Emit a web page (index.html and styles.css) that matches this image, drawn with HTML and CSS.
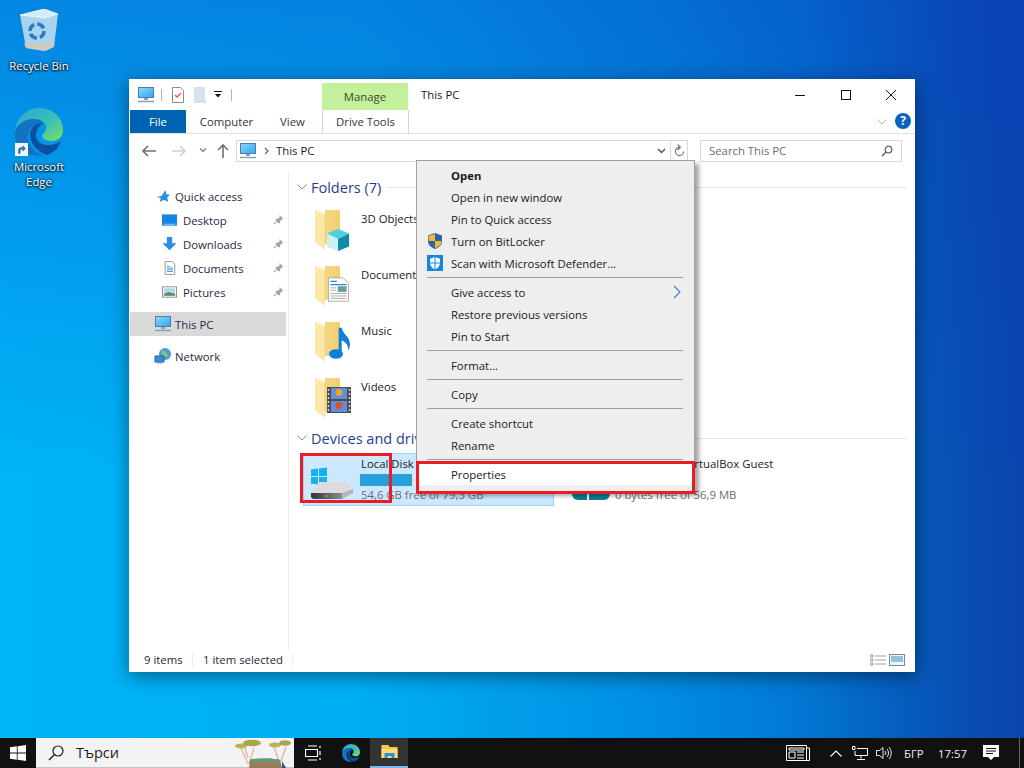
FILE: index.html
```html
<!DOCTYPE html>
<html>
<head>
    <title>This PC</title>
    <link rel="stylesheet" href="styles.css">
</head>
<body>
<svg class="defs" width="0" height="0">
    <defs>
        <linearGradient id="screenFill" x1="0" y1="0" x2="1" y2="1">
            <stop offset="0" stop-color="#8ed8fb"/>
            <stop offset="1" stop-color="#2ea6f0"/>
        </linearGradient>
        <linearGradient id="folderFill" x1="0" y1="0" x2="1" y2="0">
            <stop offset="0" stop-color="#f8dc90"/>
            <stop offset="1" stop-color="#f3cd72"/>
        </linearGradient>
        <linearGradient id="edgeFill" x1="0" y1="0" x2="1" y2="1">
            <stop offset="0" stop-color="#2aa4d8"/>
            <stop offset="0.6" stop-color="#3cc4b0"/>
            <stop offset="1" stop-color="#7ee05e"/>
        </linearGradient>
        <linearGradient id="diskFront" x1="0" y1="0" x2="1" y2="0">
            <stop offset="0" stop-color="#333"/>
            <stop offset="1" stop-color="#8a8a8a"/>
        </linearGradient>
        <symbol id="monitor" viewBox="0 0 18 16">
            <rect x="1.5" y="0.5" width="15" height="10" fill="url(#screenFill)" stroke="#4d7ea8"/>
            <path d="M7 11h4v2H7z" fill="#8aa3b8"/>
            <path d="M1 14.5h16" stroke="#7f9db8" stroke-width="1.4"/>
        </symbol>
        <symbol id="folder" viewBox="0 0 25 40">
            <path d="M0 0h25v30l-15 4V0z" fill="url(#folderFill)"/>
            <path d="M0 0l10 4v36L0 32z" fill="#fbe7a8"/>
            <path d="M10 4v30l15-4" fill="none" stroke="#eec266" stroke-width=".6"/>
        </symbol>
        <symbol id="pin" viewBox="0 0 12 12">
            <path d="M7 1l4 4-1.200 .6-2 2.200-.3 2-1.300.6-3.600-3.600.6-1.300 2-.3 2.200-2z" fill="#a3a3a3"/>
            <path d="M3.500 8.500L1 11" stroke="#a3a3a3" stroke-width="1.200"/>
        </symbol>
        <symbol id="winlogo" viewBox="0 0 16 16">
            <path d="M0 2.300l6.800-1v6.300H0zM7.600 1.200L16 0v7.600H7.600zM0 8.400h6.800v6.300l-6.800-1zM7.600 8.400H16V16l-8.400-1.200z" fill="currentColor"/>
        </symbol>
        <symbol id="edge" viewBox="0 0 48 48">
            <path d="M0 24C1 10 11 0 24 0c14 0 24 10 24 22 0 7-5 11-11 11-5 0-10-2-10-5 0-2 3-3 4-7 1-6-5-10-11-10C10 11 1 17 0 24z" fill="url(#edgeFill)"/>
            <path d="M0 24c1-8 11-14 20-13 4 .5 7 2 8 4-6-1-14 3-15 12-1 9 6 17 15 20C13 50-1 40 0 24z" fill="#1372c4"/>
            <path d="M28 15c-8-1-13 5-13 12 0 9 8 17 17 20 6-2 11-6 14-14-4 3-9 4-13 4-9 0-13-6-12-12 1-4 4-8 7-10z" fill="#0b4f9e"/>
        </symbol>
    </defs>
</svg>

<div class="desktop">
    <div class="desk-icon recycle">
        <svg class="recycle-art" viewBox="0 0 40 44">
            <path d="M1 6L25 0l14 5-4 33-9 4-19-3z" fill="#a9d4ec"/>
            <path d="M1 6L25 0l14 5-13 4z" fill="#d5ecf8" stroke="#eef8fd" stroke-width=".8"/>
            <path d="M5 34l21 1 9-3-1 6-8 4-19-3z" fill="#cfc9bf"/>
            <circle cx="18" cy="22" r="7" fill="none" stroke="#2a79c4" stroke-width="3.500" stroke-dasharray="8 3"/>
        </svg>
        <span>Recycle Bin</span>
    </div>
    <div class="desk-icon edge-link">
        <div class="edge-art">
            <svg class="edge-large"><use href="#edge"/></svg>
            <svg class="shortcut" viewBox="0 0 12 12">
                <rect width="12" height="12" fill="#f4f4f4"/>
                <path d="M3 10V7c0-2 1-3 3-3h1V2l3 3-3 3V6H6C5 6 5 7 5 8v2z" fill="#2a6fb0"/>
            </svg>
        </div>
        <span>Microsoft<br>Edge</span>
    </div>

    <div class="window">
        <div class="top-strip">
            <div class="quick-bar">
                <svg class="ico18"><use href="#monitor"/></svg>
                <i class="qsep"></i>
                <svg class="qa-check" viewBox="0 0 12 16">
                    <path d="M.5.500h8l3 3v12H.500z" fill="#fff" stroke="#8c8c8c"/>
                    <path d="M3 8l2 2 4-4" fill="none" stroke="#e2572b" stroke-width="1.300"/>
                </svg>
                <svg class="qa-doc" viewBox="0 0 12 16">
                    <path d="M0 0h11v13h1v3H0z" fill="#d5e1f1"/>
                </svg>
                <svg class="qa-drop" viewBox="0 0 8 7">
                    <path d="M0 0h8v1H0zM1 3h6L4 6.500z" fill="#111"/>
                </svg>
                <i class="qsep last"></i>
            </div>
            <div class="manage-tab">Manage</div>
            <div class="win-title">This PC</div>
            <div class="win-controls">
                <svg viewBox="0 0 10 10"><path d="M0 5.500h10" stroke="#111"/></svg>
                <svg viewBox="0 0 10 10"><rect x=".5" y=".5" width="9" height="9" fill="none" stroke="#111"/></svg>
                <svg viewBox="0 0 10 10"><path d="M0 0l10 10M10 0L0 10" stroke="#111"/></svg>
            </div>
        </div>

        <div class="ribbon-tabs">
            <div class="tab tab-file">File</div>
            <div class="tab tab-computer">Computer</div>
            <div class="tab tab-view">View</div>
            <div class="tab tab-drive">Drive Tools</div>
            <svg class="ribbon-chev" viewBox="0 0 10 6"><path d="M.5.500L5 5 9.500.500" fill="none" stroke="#b4b4b4"/></svg>
            <div class="help">?</div>
        </div>

        <div class="nav-row">
            <svg class="nav-ico" viewBox="0 0 14 12"><path d="M6 1L1 6l5 5M1 6h13" fill="none" stroke="#707070" stroke-width="1.600"/></svg>
            <svg class="nav-ico" viewBox="0 0 14 12"><path d="M8 1l5 5-5 5M13 6H0" fill="none" stroke="#d0d0d0" stroke-width="1.600"/></svg>
            <svg class="nav-small" viewBox="0 0 8 5"><path d="M1 .5l3 3 3-3" fill="none" stroke="#777" stroke-width="1.200"/></svg>
            <svg class="nav-ico nav-up" viewBox="0 0 12 14"><path d="M1 6l5-5 5 5M6 1v13" fill="none" stroke="#707070" stroke-width="1.600"/></svg>
            <div class="address">
                <svg class="ico18"><use href="#monitor"/></svg>
                <svg class="crumb" viewBox="0 0 5 8"><path d="M1 1l3 3-3 3" fill="none" stroke="#666" stroke-width="1.200"/></svg>
                <span class="addr-text">This PC</span>
                <svg class="addr-drop" viewBox="0 0 9 6"><path d="M1 1l3.500 3.500L8 1" fill="none" stroke="#555" stroke-width="1.500"/></svg>
                <div class="addr-refresh">
                    <svg viewBox="0 0 12 14"><path d="M6 3.500a4.500 4.500 0 1 0 4.500 4.500M4 .5l3 3-3 3" fill="none" stroke="#777" stroke-width="1.300"/></svg>
                </div>
            </div>
            <div class="search">
                <span>Search This PC</span>
                <svg viewBox="0 0 12 12"><circle cx="7.500" cy="4.500" r="3.300" fill="none" stroke="#666" stroke-width="1.300"/><path d="M5 7l-4 4" stroke="#666" stroke-width="1.600"/></svg>
            </div>
        </div>

        <div class="main">
            <div class="sidebar">
                <div class="side-row top">
                    <svg class="side-ico star" viewBox="0 0 14 14"><path d="M9 0l1 4.500 4 .5-3 3 1 5-4.500-2.500L3 13l1-4-4-1.500 5-1z" fill="#2b8ee0"/></svg>
                    Quick access
                </div>
                <div class="side-row sub">
                    <svg class="side-ico" viewBox="0 0 16 12"><rect width="16" height="12" fill="#1287e6"/><path d="M2 10.500h12" stroke="#9fd3f7"/></svg>
                    Desktop
                    <svg class="pin"><use href="#pin"/></svg>
                </div>
                <div class="side-row sub">
                    <svg class="side-ico" viewBox="0 0 16 16"><path d="M5 0h6v7h5l-8 8-8-8h5z" fill="#2f8de4"/></svg>
                    Downloads
                    <svg class="pin"><use href="#pin"/></svg>
                </div>
                <div class="side-row sub">
                    <svg class="side-ico" viewBox="0 0 16 16"><path d="M3 .5h8l3 3v12H3z" fill="#fff" stroke="#8c8c8c"/><path d="M5 6h3M5 8h7M5 10h7M5 12h7" stroke="#3c8fd8"/></svg>
                    Documents
                    <svg class="pin"><use href="#pin"/></svg>
                </div>
                <div class="side-row sub">
                    <svg class="side-ico" viewBox="0 0 16 12"><rect x=".5" y=".5" width="15" height="11" fill="#fff" stroke="#8c8c8c"/><rect x="2" y="2" width="12" height="8" fill="#b5d8ec"/><path d="M2 8l5-2 7 2v2H2z" fill="#5f8a6c"/></svg>
                    Pictures
                    <svg class="pin"><use href="#pin"/></svg>
                </div>
                <div class="side-row selected group">
                    <svg class="ico18 side-pc"><use href="#monitor"/></svg>
                    This PC
                </div>
                <div class="side-row group">
                    <svg class="ico18 side-pc" viewBox="0 0 18 16"><circle cx="11" cy="6" r="6" fill="#4c9bd8"/><path d="M7 2l5 2 2 4-4 2z" fill="#8fc86a"/><rect x="1" y="8" width="9" height="6" fill="#2e8fe0" stroke="#28689c"/><path d="M3 15h5" stroke="#6e8ca6"/></svg>
                    Network
                </div>
            </div>

            <div class="content">
                <div class="group-head first">
                    <svg viewBox="0 0 10 6"><path d="M.5.500L5 5 9.500.500" fill="none" stroke="#8a8a8a"/></svg>
                    <span>Folders (7)</span>
                    <i></i>
                </div>
                <div class="folder-list">
                    <div class="folder-item">
                        <div class="folder-art">
                            <svg class="folder-back"><use href="#folder"/></svg>
                            <svg class="folder-badge badge-3d" viewBox="0 0 26 26">
                                <path d="M13 1l12 5-12 6L1 6z" fill="#4fd0e0"/>
                                <path d="M1 6l12 6v13L1 20z" fill="#c9f1f2"/>
                                <path d="M25 6l-12 6v13l12-5z" fill="#0d8ba8"/>
                            </svg>
                        </div>
                        <span>3D Objects</span>
                    </div>
                    <div class="folder-item">
                        <div class="folder-art">
                            <svg class="folder-back"><use href="#folder"/></svg>
                            <svg class="folder-badge badge-doc" viewBox="0 0 26 30">
                                <path d="M.5.500h18l7 7v22H.500z" fill="#fff" stroke="#9a9a9a"/>
                                <path d="M3 5h8M3 9h20" stroke="#2f86d8" stroke-width="1.400"/>
                                <rect x="12" y="11" width="11" height="7" fill="#6e9e9c"/>
                                <path d="M3 13h7M3 16h7M3 20h20M3 23h20M3 26h20" stroke="#9a9a9a"/>
                            </svg>
                        </div>
                        <span>Documents</span>
                    </div>
                    <div class="folder-item">
                        <div class="folder-art">
                            <svg class="folder-back"><use href="#folder"/></svg>
                            <svg class="folder-badge badge-music" viewBox="0 0 24 36">
                                <ellipse cx="8" cy="30" rx="8" ry="5.500" fill="#0f7fdc"/>
                                <path d="M11 30V0h3.500c1 7 9.500 10 9.500 19 0 3-1 5-2 7 0-7-3-10-7.500-11.500V30z" fill="#0f7fdc"/>
                            </svg>
                        </div>
                        <span>Music</span>
                    </div>
                    <div class="folder-item">
                        <div class="folder-art">
                            <svg class="folder-back"><use href="#folder"/></svg>
                            <svg class="folder-badge badge-video" viewBox="0 0 24 26">
                                <rect width="24" height="26" fill="#4b4b4b"/>
                                <rect x="4" y="1" width="16" height="11" fill="#5f8fe0"/>
                                <rect x="4" y="14" width="16" height="11" fill="#5f8fe0"/>
                                <circle cx="12" cy="5.500" r="3.600" fill="#e8a52c"/>
                                <circle cx="12" cy="18.500" r="3.600" fill="#d9542c"/>
                                <path d="M1.500 2v22M22.500 2v22" stroke="#ddd" stroke-width="1.400" stroke-dasharray="2 2"/>
                            </svg>
                        </div>
                        <span>Videos</span>
                    </div>
                </div>

                <div class="group-head second">
                    <svg viewBox="0 0 10 6"><path d="M.5.500L5 5 9.500.500" fill="none" stroke="#8a8a8a"/></svg>
                    <span>Devices and drives (2)</span>
                    <i></i>
                </div>
                <div class="drives">
                    <div class="drive active">
                        <svg class="drive-art" viewBox="0 0 44 32">
                            <path d="M1 1.500L8 .5V8H1zM9 .4L17 -.5V8H9zM1 9h7v7.500l-7-1zM9 9h8v8.500l-8-1z" fill="#15b0ef"/>
                            <path d="M1 25l8-11h27l7 7v4l-11 6H3z" fill="#dcdcdc"/>
                            <path d="M32 25l11-4v4l-11 6z" fill="#b5b5b5"/>
                            <path d="M1 25h31v6H3l-2-2z" fill="url(#diskFront)"/>
                            <path d="M15 28h3" stroke="#47d447" stroke-width="1.400"/>
                        </svg>
                        <div class="drive-info">
                            <div class="drive-name">Local Disk (C:)</div>
                            <div class="drive-bar"><b class="used-c"></b></div>
                            <div class="drive-free">54,6 GB free of 79,3 GB</div>
                        </div>
                    </div>
                    <div class="drive other">
                        <div class="disc-art"></div>
                        <div class="drive-info">
                            <div class="drive-name">DVD Drive (D:) VirtualBox Guest</div>
                            <div class="drive-bar blank"></div>
                            <div class="drive-free">0 bytes free of 56,9 MB</div>
                        </div>
                    </div>
                </div>
            </div>
        </div>

        <div class="status">
            <span class="st-count">9 items</span>
            <span class="st-sel">1 item selected</span>
            <div class="st-views">
                <svg viewBox="0 0 16 12"><path d="M0 1h3v2H0zM5 2h11M0 5h3v2H0zM5 6h11M0 9h3v2H0zM5 10h11" fill="none" stroke="#8a8a8a" stroke-width=".8"/></svg>
                <svg viewBox="0 0 16 12"><rect x=".5" y=".5" width="15" height="11" fill="#f2f6f9" stroke="#7a8894"/><rect x="2" y="2" width="12" height="6" fill="#8fc2e0"/></svg>
            </div>
        </div>
    </div>

    <div class="context-menu">
        <div class="item bold">Open</div>
        <div class="item">Open in new window</div>
        <div class="item">Pin to Quick access</div>
        <div class="item">
            <svg class="item-ico" viewBox="0 0 16 16"><path d="M8 0l7 2.500V8c0 4-3 6.500-7 8-4-1.500-7-4-7-8V2.500z" fill="#2f63a8"/><path d="M8 1v7h6.500c0 3.500-3 6-6.500 7.200V8H1.500V3z" fill="#f5b82e"/></svg>
            Turn on BitLocker
        </div>
        <div class="item">
            <svg class="item-ico" viewBox="0 0 16 16"><rect width="16" height="16" fill="#1585de"/><path d="M8 2l5 1.800V8c0 3-2 5-5 6.500C5 13 3 11 3 8V3.800z" fill="#fff"/><path d="M8 2v12.500M3 8h10" stroke="#1585de"/></svg>
            Scan with Microsoft Defender...
        </div>
        <hr>
        <div class="item">
            Give access to
            <svg class="sub-arrow" viewBox="0 0 8 14"><path d="M1 1l6 6-6 6" fill="none" stroke="#3d7fc0" stroke-width="1.100"/></svg>
        </div>
        <div class="item">Restore previous versions</div>
        <div class="item">Pin to Start</div>
        <hr>
        <div class="item">Format...</div>
        <hr>
        <div class="item">Copy</div>
        <hr>
        <div class="item">Create shortcut</div>
        <div class="item">Rename</div>
        <hr>
        <div class="item hover">Properties</div>
    </div>

    <div class="mark mark-disk"></div>
    <div class="mark mark-props"></div>

    <div class="taskbar">
        <div class="start"><svg class="start-logo"><use href="#winlogo"/></svg></div>
        <div class="tb-search">
            <svg class="tb-glass" viewBox="0 0 16 16"><circle cx="10" cy="6" r="5" fill="none" stroke="#222" stroke-width="1.200"/><path d="M6.500 9.500L1 15" stroke="#222" stroke-width="1.400"/></svg>
            <span>Търси</span>
            <svg class="tb-doodle" viewBox="0 0 60 30">
                <path d="M7 10l7 16M20 10l-5 16M11 10l3 10M40 9l5 14M52 9l-5 14" stroke="#dcbfae" stroke-width="1.500" fill="none"/>
                <ellipse cx="7" cy="8" rx="6" ry="2.500" fill="#b8b25a"/>
                <ellipse cx="18" cy="5" rx="9" ry="3.200" fill="#a9a64e"/>
                <ellipse cx="41" cy="7" rx="6" ry="2.500" fill="#b8b25a"/>
                <ellipse cx="51" cy="5" rx="6" ry="2.800" fill="#a9a64e"/>
                <path d="M16 22c4-2 26-2 30 0l2 8H15z" fill="#9a7a58"/>
                <path d="M16 22c4-2 26-2 30 0l.5 2H15.500z" fill="#5e9a78"/>
                <path d="M48 23l4 7h-4z" fill="#24578c"/>
            </svg>
        </div>
        <div class="tb-app">
            <svg class="tb-taskview" viewBox="0 0 16 16"><path d="M3 1h9M3 15h9M.5 4.500h12v7H.500zM15 1v2M15 6v4M15 13v2" fill="none" stroke="#fff" stroke-width="1.200"/></svg>
        </div>
        <div class="tb-app">
            <svg class="tb-edge"><use href="#edge"/></svg>
        </div>
        <div class="tb-app tb-active">
            <svg class="tb-explorer" viewBox="0 0 16 16">
                <path d="M0 1h7l1 2h8v11H0z" fill="#f7c948"/>
                <path d="M0 5h16v9H0z" fill="#fcdc78"/>
                <path d="M3 9h10v5h-3v-2H6v2H3z" fill="#2b8fd8"/>
            </svg>
        </div>
        <div class="tray">
            <svg class="tray-news" viewBox="0 0 24 16"><path d="M.5.500h20v15H.500zM20.500 3h3v12.500h-3M3 3h15v2H3zM3 7h6v6H3zM11 7h7M11 10h7M11 13h7" fill="none" stroke="#fff"/></svg>
            <svg class="tray-caret" viewBox="0 0 12 7"><path d="M.5 6.500L6 1l5.500 5.500" fill="none" stroke="#fff" stroke-width="1.100"/></svg>
            <svg class="tray-net" viewBox="0 0 16 14"><path d="M3 .5H.5v3H3zM5 2.500h10.500v7H3V5M9 9.500v3M5 13.500h8" fill="none" stroke="#fff"/></svg>
            <svg class="tray-sound" viewBox="0 0 16 14"><path d="M.5 4.500h3L7 1.500v11l-3.500-3h-3zM9 5a3 3 0 0 1 0 4M11 3a6 6 0 0 1 0 8M13 1a9 9 0 0 1 0 12" fill="none" stroke="#fff" stroke-width=".9"/></svg>
            <span class="tray-lang">БГР</span>
            <span class="tray-clock">17:57</span>
            <svg class="tray-note" viewBox="0 0 16 16"><path d="M0 0h16v12h-5l-3 3-3-3H0z" fill="#fff"/><path d="M3 3.500h10M3 6h10M3 8.500h7" stroke="#111"/></svg>
            <i class="show-desktop"></i>
        </div>
    </div>
</div>
</body>
</html>
```

FILE: styles.css
```css
:root {
    --ui-font: "Open Sans", "Noto Sans", sans-serif;
    --text-color: #1a1a1a;
    --line-color: #e3e3e3;
    --head-blue: #1e3f94;
    --menu-bg: #eeeeee;
    --menu-line: #a0a0a0;
    --mark-red: #ed1c24;
}

* {
    box-sizing: border-box;
}

html, body {
    margin: 0;
    height: 100%;
    overflow: hidden;
}

body {
    font-family: var(--ui-font);
    font-size: 11.35px;
    color: var(--text-color);
}

.defs {
    position: absolute;
}

svg {
    display: block;
    flex: none;
}

/* Desktop */
.desktop {
    position: relative;
    height: 768px;
    display: flex;
    flex-direction: column;
    justify-content: flex-end;
    overflow: hidden;
    background:
        linear-gradient(to bottom, rgba(10, 60, 190, 0.38) 0%, rgba(10, 60, 190, 0) 62%),
        linear-gradient(90deg, #00b4f8 0%, #00aef4 35%, #0090e4 62%, #0278d4 78%, #0850b4 93%, #0a45ae 100%);
}

.desk-icon {
    position: absolute;
    width: 74px;
    display: flex;
    flex-direction: column;
    align-items: center;
    color: #fff;
    text-align: center;
    line-height: 15px;
    font-size: 11.35px;
    text-shadow: 0 1px 2px #000, 0 0 3px #000;
}

.recycle {
    left: 2px;
    top: 9px;
}

.recycle-art {
    width: 40px;
    height: 44px;
    margin-bottom: 5px;
}

.edge-link {
    left: 2px;
    top: 108px;
}

.edge-art {
    position: relative;
    width: 48px;
    height: 48px;
    margin-bottom: 3px;
}

.edge-large {
    width: 48px;
    height: 48px;
}

.shortcut {
    position: absolute;
    left: 0;
    bottom: 0;
    width: 13px;
    height: 13px;
}

/* Explorer window */
.window {
    position: absolute;
    left: 129px;
    top: 79px;
    width: 786px;
    height: 593px;
    display: flex;
    flex-direction: column;
    background: #fff;
    box-shadow: 0 4px 18px rgba(0, 0, 0, 0.45);
}

.top-strip {
    height: 31px;
    display: flex;
    align-items: flex-end;
    flex: none;
}

.quick-bar {
    width: 193px;
    height: 31px;
    padding-left: 8px;
    display: flex;
    align-items: center;
    gap: 6px;
}

.ico18 {
    width: 18px;
    height: 16px;
}

.qsep {
    width: 1px;
    height: 12px;
    background: #b5b5b5;
}

.qsep.last {
    margin-left: 3px;
}

.qa-check, .qa-doc {
    width: 12px;
    height: 16px;
    margin-left: 4px;
}

.qa-drop {
    width: 8px;
    height: 7px;
    margin-left: 2px;
}

.manage-tab {
    width: 86px;
    height: 27px;
    background: #c3f09b;
    color: #3c4a38;
    text-align: center;
    line-height: 27px;
}

.win-title {
    margin-left: 13px;
    align-self: center;
}

.win-controls {
    margin-left: auto;
    height: 31px;
    width: 120px;
    padding-right: 19px;
    display: flex;
    justify-content: space-between;
    align-items: center;
}

.win-controls svg {
    width: 10px;
    height: 10px;
}

.ribbon-tabs {
    height: 24px;
    flex: none;
    display: flex;
    align-items: stretch;
    border-bottom: 1px solid #e1e1e1;
    position: relative;
}

.tab {
    line-height: 24px;
    text-align: center;
    color: #333;
}

.tab-file {
    width: 56px;
    margin-left: 1px;
    background: #0063b1;
    color: #fff;
}

.tab-computer {
    width: 80px;
    padding-left: 1px;
}

.tab-view {
    width: 53px;
}

.tab-drive {
    width: 87px;
    margin-left: 3px;
    border-left: 1px solid #d5d5d5;
    border-right: 1px solid #d5d5d5;
}

.ribbon-chev {
    width: 10px;
    height: 6px;
    margin-left: auto;
    align-self: center;
}

.help {
    width: 16px;
    height: 16px;
    margin: 3px 4px 0 8px;
    border-radius: 50%;
    background: #0a63bd;
    color: #fff;
    font-weight: 700;
    font-size: 12px;
    line-height: 16px;
    text-align: center;
}

.nav-row {
    height: 37px;
    flex: none;
    display: flex;
    align-items: center;
    padding: 0 0 4px 13px;
}

.nav-ico {
    width: 14px;
    height: 12px;
    margin-right: 16px;
}

.nav-small {
    width: 8px;
    height: 5px;
    margin-right: 10px;
    margin-left: -3px;
}

.nav-up {
    width: 12px;
    height: 14px;
    margin-right: 7px;
}

.address {
    width: 452px;
    height: 22px;
    display: flex;
    align-items: center;
    padding-left: 2px;
    border: 1px solid #d9d9d9;
}

.crumb {
    width: 5px;
    height: 8px;
    margin: 0 7px 0 7px;
}

.addr-drop {
    width: 9px;
    height: 6px;
    margin-left: auto;
    margin-right: 4px;
}

.addr-refresh {
    width: 17px;
    height: 20px;
    border-left: 1px solid #d9d9d9;
    display: flex;
    align-items: center;
    justify-content: center;
}

.addr-refresh svg {
    width: 11px;
    height: 13px;
}

.search {
    width: 202px;
    height: 22px;
    margin-left: 12px;
    display: flex;
    align-items: center;
    justify-content: space-between;
    padding: 0 8px;
    border: 1px solid #d9d9d9;
    color: #6d6d6d;
}

.search svg {
    width: 12px;
    height: 12px;
}

.main {
    flex: 1;
    display: flex;
    min-height: 0;
}

/* Navigation pane */
.sidebar {
    width: 160px;
    padding: 13px 2px 0 1px;
    border-right: 1px solid #eeeeee;
}

.side-row {
    height: 24px;
    display: flex;
    align-items: center;
    color: #1f2a44;
    position: relative;
}

.side-row.top {
    padding-left: 27px;
    gap: 5px;
}

.side-row.sub {
    padding-left: 32px;
    gap: 6px;
}

.side-row.group {
    margin-top: 8px;
    padding-left: 24px;
    gap: 3px;
}

.side-row.selected {
    background: #d9d9d9;
}

.side-ico {
    width: 15px;
    height: 14px;
}

.star {
    width: 13px;
    height: 13px;
}

.pin {
    position: absolute;
    left: 143px;
    top: 6px;
    width: 11px;
    height: 11px;
}

/* Content pane */
.content {
    flex: 1;
    min-width: 0;
    padding-left: 8px;
    padding-right: 8px;
}

.group-head {
    height: 20px;
    display: flex;
    align-items: center;
    color: var(--head-blue);
    font-size: 14.5px;
}

.group-head.first {
    margin-top: 6px;
}

.group-head.second {
    margin-top: -3px;
}

.group-head svg {
    width: 10px;
    height: 6px;
    margin-right: 4px;
}

.group-head i {
    flex: 1;
    height: 1px;
    background: var(--line-color);
    margin-left: 7px;
}

.folder-list {
    padding-top: 10px;
}

.folder-item {
    height: 56px;
    display: flex;
    padding-left: 17px;
    line-height: 24px;
}

.folder-art {
    position: relative;
    width: 47px;
    height: 46px;
}

.folder-back {
    position: absolute;
    left: 1px;
    top: 3px;
    width: 25px;
    height: 40px;
}

.folder-badge {
    position: absolute;
}

.badge-3d {
    left: 12px;
    top: 21px;
    width: 24px;
    height: 24px;
}

.badge-doc {
    left: 14px;
    top: 12px;
    width: 21px;
    height: 29px;
}

.badge-music {
    left: 15px;
    top: 8px;
    width: 21px;
    height: 33px;
}

.badge-video {
    left: 13px;
    top: 12px;
    width: 24px;
    height: 26px;
}

.folder-item span {
    line-height: 24px;
}

.drives {
    margin-top: 5px;
    display: flex;
}

.drive {
    width: 251px;
    height: 53px;
    display: flex;
    border: 1px solid transparent;
}

.drive.active {
    margin-left: 6px;
    background: #cce8ff;
    border-color: #99d1ff;
}

.drive.other {
    margin-left: 11px;
    width: 300px;
}

.drive-art {
    width: 44px;
    height: 32px;
    margin: 14px 7px 0 6px;
    overflow: visible;
}

.disc-art {
    width: 38px;
    height: 11px;
    margin: 35px 5px 0 6px;
    background: linear-gradient(90deg, #0f7f96 0 40%, #ffffff 40% 46%, #0f7f96 46%);
    border-radius: 0 0 6px 6px;
}

.drive-info {
    padding-top: 2px;
    flex: 1;
}

.drive-name {
    line-height: 16px;
    white-space: nowrap;
}

.other .drive-name {
    margin-left: -8px;
}

.drive-bar {
    width: 186px;
    height: 12px;
    margin-top: 2px;
    margin-left: -1px;
    background: #e6e6e6;
}

.drive-bar.blank {
    background: none;
}

.used-c {
    display: block;
    width: 52px;
    height: 100%;
    background: #26a0da;
}

.drive-free {
    color: #6d6d6d;
    line-height: 17px;
}

/* Status bar */
.status {
    height: 22px;
    flex: none;
    display: flex;
    align-items: center;
    padding: 0 0 2px 15px;
    color: #1f2a44;
}

.st-count {
    width: 49px;
    height: 16px;
    line-height: 16px;
    border-right: 1px solid #eeeeee;
}

.st-sel {
    width: 100px;
    height: 16px;
    line-height: 16px;
    padding-left: 10px;
    border-right: 1px solid #eeeeee;
}

.st-views {
    margin-left: auto;
    padding-right: 10px;
    display: flex;
    gap: 3px;
}

.st-views svg {
    width: 16px;
    height: 12px;
}

/* Context menu */
.context-menu {
    position: absolute;
    left: 416px;
    top: 160px;
    width: 279px;
    height: 332px;
    padding: 3px 2px;
    background: var(--menu-bg);
    border: 1px solid var(--menu-line);
    box-shadow: 4px 4px 4px rgba(0, 0, 0, 0.35);
}

.item {
    height: 22px;
    padding-left: 32px;
    display: flex;
    align-items: center;
    position: relative;
}

.bold {
    font-weight: 700;
}

.hover {
    background: #fff;
}

.context-menu hr {
    height: 1px;
    margin: 3px 9px 3px 8px;
    border: 0;
    background: #a0a0a0;
}

.item-ico {
    position: absolute;
    left: 8px;
    top: 3px;
    width: 16px;
    height: 16px;
}

.sub-arrow {
    position: absolute;
    right: 11px;
    top: 4px;
    width: 8px;
    height: 14px;
}

/* Red callouts */
.mark {
    position: absolute;
    border: 3px solid var(--mark-red);
}

.mark-disk {
    left: 300px;
    top: 453px;
    width: 92px;
    height: 50px;
}

.mark-props {
    left: 416px;
    top: 461px;
    width: 279px;
    height: 33px;
}

/* Taskbar */
.taskbar {
    position: relative;
    height: 30px;
    flex: none;
    display: flex;
    align-items: stretch;
    background: #111111;
    color: #fff;
}

.start {
    width: 36px;
    display: flex;
    align-items: center;
    justify-content: center;
}

.start-logo {
    width: 16px;
    height: 16px;
    color: #fff;
}

.tb-search {
    width: 258px;
    display: flex;
    align-items: center;
    padding-left: 12px;
    background: #f3f3f3;
    border-bottom: 1px solid #c4c4c4;
    color: #1a1a1a;
    font-size: 14.5px;
    position: relative;
}

.tb-glass {
    width: 16px;
    height: 16px;
    margin-right: 12px;
}

.tb-doodle {
    position: absolute;
    right: 0;
    top: 0;
    width: 60px;
    height: 30px;
}

.tb-app {
    width: 38px;
    display: flex;
    align-items: center;
    justify-content: center;
}

.tb-taskview {
    width: 16px;
    height: 16px;
}

.tb-edge {
    width: 18px;
    height: 18px;
}

.tb-active {
    background: #333333;
    border-bottom: 2px solid #76b9ed;
}

.tb-explorer {
    width: 17px;
    height: 16px;
}

.tray {
    margin-left: auto;
    display: flex;
    align-items: center;
    font-size: 11.35px;
    color: #eee;
}

.tray-news {
    width: 24px;
    height: 16px;
    margin-right: 20px;
}

.tray-caret {
    width: 12px;
    height: 7px;
    margin-right: 10px;
}

.tray-net {
    width: 16px;
    height: 14px;
    margin-right: 8px;
}

.tray-sound {
    width: 16px;
    height: 14px;
    margin-right: 12px;
}

.tray-lang {
    width: 34px;
}

.tray-clock {
    width: 45px;
}

.tray-note {
    width: 16px;
    height: 16px;
    margin-right: 20px;
}

.show-desktop {
    width: 1px;
    height: 30px;
    margin-right: 4px;
    background: #666;
}
```
